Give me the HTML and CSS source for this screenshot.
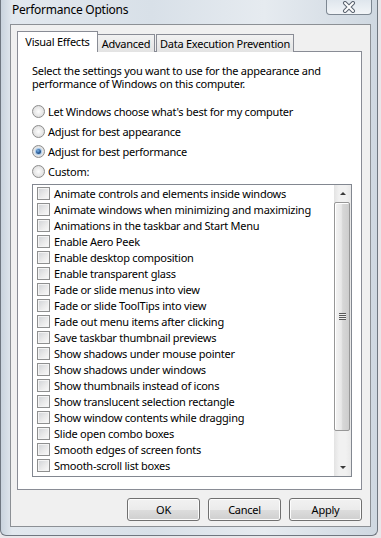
FILE: index.html
```html
<!DOCTYPE html>
<html lang="en">
<head>
    <meta charset="UTF-8">
    <meta name="viewport" content="width=device-width, initial-scale=1.0">
    <title>Performance Options</title>
    <link rel="stylesheet" href="styles.css">
</head>
<body>
    <div class="window">
        <div class="titlebar">
            <span class="title">Performance Options</span>
            <div class="close">
                <svg width="14" height="12" viewBox="0 0 14 12">
                    <path d="M3 2 L11 10 M11 2 L3 10" stroke="#5b6470" stroke-width="4" stroke-linecap="round"/>
                    <path d="M3 2 L11 10 M11 2 L3 10" stroke="#ffffff" stroke-width="2" stroke-linecap="round"/>
                </svg>
            </div>
        </div>

        <div class="client">
            <div class="tabs">
                <div class="tab active">Visual Effects</div>
                <div class="tab tab-adv">Advanced</div>
                <div class="tab tab-dep">Data Execution Prevention</div>
            </div>

            <div class="panel">
                <p class="intro">Select the settings you want to use for the appearance and<br>performance of Windows on this computer.</p>

                <div class="radios">
                    <div class="radio"><span class="circle"></span>Let Windows choose what's best for my computer</div>
                    <div class="radio"><span class="circle"></span>Adjust for best appearance</div>
                    <div class="radio"><span class="circle checked"></span>Adjust for best performance</div>
                    <div class="radio"><span class="circle"></span>Custom:</div>
                </div>

                <div class="listbox">
                    <div class="items">
                        <div class="item"><span class="box"></span>Animate controls and elements inside windows</div>
                        <div class="item"><span class="box"></span>Animate windows when minimizing and maximizing</div>
                        <div class="item"><span class="box"></span>Animations in the taskbar and Start Menu</div>
                        <div class="item"><span class="box"></span>Enable Aero Peek</div>
                        <div class="item"><span class="box"></span>Enable desktop composition</div>
                        <div class="item"><span class="box"></span>Enable transparent glass</div>
                        <div class="item"><span class="box"></span>Fade or slide menus into view</div>
                        <div class="item"><span class="box"></span>Fade or slide ToolTips into view</div>
                        <div class="item"><span class="box"></span>Fade out menu items after clicking</div>
                        <div class="item"><span class="box"></span>Save taskbar thumbnail previews</div>
                        <div class="item"><span class="box"></span>Show shadows under mouse pointer</div>
                        <div class="item"><span class="box"></span>Show shadows under windows</div>
                        <div class="item"><span class="box"></span>Show thumbnails instead of icons</div>
                        <div class="item"><span class="box"></span>Show translucent selection rectangle</div>
                        <div class="item"><span class="box"></span>Show window contents while dragging</div>
                        <div class="item"><span class="box"></span>Slide open combo boxes</div>
                        <div class="item"><span class="box"></span>Smooth edges of screen fonts</div>
                        <div class="item"><span class="box"></span>Smooth-scroll list boxes</div>
                    </div>
                    <div class="scrollbar">
                        <div class="arrow up"></div>
                        <div class="thumb"><span class="grip"></span></div>
                        <div class="track"></div>
                        <div class="arrow down"></div>
                    </div>
                </div>
            </div>

            <div class="buttons">
                <button>OK</button>
                <button>Cancel</button>
                <button>Apply</button>
            </div>
        </div>
    </div>
</body>
</html>
```

FILE: styles.css
```css
body {
    margin: 0;
    width: 381px;
    height: 538px;
    overflow: hidden;
    background: #e9e7ea;
    font-family: "Noto Sans", "Open Sans", sans-serif;
    font-size: 11px;
    letter-spacing: -0.25px;
    color: #000;
}
.window {
    width: 378px;
    height: 536px;
    box-sizing: border-box;
    padding: 0 6px 8px 9px;
    display: flex;
    flex-direction: column;
    border-radius: 0 0 6px 6px;
    border: 1px solid #6f7780;
    border-top: none;
    background: linear-gradient(90deg, #c9d3dd 0%, #e2e8ee 3%, #d8e0e8 40%, #e6ebf0 70%, #cfd8e1 100%);
}
.titlebar {
    height: 24px;
    display: flex;
    justify-content: space-between;
    align-items: flex-start;
}
.title {
    padding: 2px 0 0 2px;
    line-height: 16px;
    font-size: 12px;
}
.close {
    width: 46px;
    height: 15px;
    box-sizing: border-box;
    margin-right: -1px;
    border: 1px solid #7d8792;
    border-top: none;
    border-radius: 0 0 4px 4px;
    background: linear-gradient(#dfe6ed, #f2f5f8);
    display: flex;
    justify-content: center;
    align-items: center;
}
.client {
    flex: 1;
    background: #f0f0f0;
    border: 1px solid #8c9095;
    padding: 7px 8px 0 6px;
}
.tabs {
    display: flex;
    align-items: flex-end;
    height: 20px;
    margin-bottom: -1px;
}
.tab {
    height: 18px;
    box-sizing: border-box;
    border: 1px solid #898c95;
    border-bottom: none;
    background: linear-gradient(#f2f2f2, #e3e3e3);
    line-height: 17px;
    text-align: center;
    white-space: nowrap;
}
.tab.active {
    position: relative;
    z-index: 1;
    height: 21px;
    width: 81px;
    background: #fff;
    margin-right: -1px;
    line-height: 19px;
}
.tab-adv {
    width: 58px;
}
.tab-dep {
    width: 138px;
    margin-left: 1px;
}
.panel {
    height: 439px;
    box-sizing: border-box;
    background: #fff;
    border: 1px solid #898c95;
    padding: 12px 12px 0 14px;
}
.intro {
    margin: 0;
    line-height: 13px;
}
.radios {
    margin-top: 11px;
}
.radio {
    height: 20px;
    display: flex;
    align-items: center;
}
.circle {
    width: 13px;
    height: 13px;
    box-sizing: border-box;
    border-radius: 50%;
    border: 1px solid #8d8d8d;
    background: radial-gradient(circle at 50% 50%, #fdfdfd 0%, #e7e7e7 55%, #cfcfcf 100%);
    margin-right: 3px;
    display: flex;
    justify-content: center;
    align-items: center;
}
.circle.checked::after {
    content: "";
    width: 5px;
    height: 5px;
    border-radius: 50%;
    background: radial-gradient(circle at 40% 35%, #7fb6e8 0%, #2a5f9e 50%, #14304f 100%);
    box-shadow: 0 0 1px 1px #9cc4ea;
}
.listbox {
    margin-top: 3px;
    width: 320px;
    height: 293px;
    box-sizing: border-box;
    border: 1px solid #828790;
    display: flex;
}
.items {
    flex: 1;
    padding-left: 4px;
}
.item {
    height: 16px;
    display: flex;
    align-items: center;
}
.box {
    width: 13px;
    height: 13px;
    box-sizing: border-box;
    border: 1px solid #8e8f8f;
    background: linear-gradient(135deg, #cfd2d6 0%, #eaeaea 55%, #fafafa 100%);
    box-shadow: inset 0 0 0 1px #f4f4f4;
    margin-right: 4px;
}
.scrollbar {
    width: 17px;
    display: flex;
    flex-direction: column;
    background: linear-gradient(90deg, #e3e3e3, #f1f1f1 30%, #f1f1f1 70%, #e8e8e8);
}
.arrow {
    height: 17px;
    display: flex;
    justify-content: center;
    align-items: center;
}
.arrow::after {
    content: "";
    border-left: 3px solid transparent;
    border-right: 3px solid transparent;
}
.arrow.up::after {
    border-bottom: 3px solid #3a3a3a;
}
.arrow.down::after {
    border-top: 3px solid #3a3a3a;
}
.thumb {
    height: 229px;
    margin: 0 1px 0 0;
    box-sizing: border-box;
    border: 1px solid #979797;
    border-radius: 2px;
    background: linear-gradient(90deg, #f4f4f4 0%, #e8e8e8 45%, #d7d7d7 55%, #cdcdcd 100%);
    box-shadow: inset 1px 1px 0 #fff;
    display: flex;
    justify-content: center;
    align-items: center;
}
.grip {
    width: 7px;
    height: 7px;
    background: repeating-linear-gradient(#5a5a5a 0 1px, #eeeeee 1px 2px);
}
.track {
    flex: 1;
}
.buttons {
    display: flex;
    justify-content: flex-end;
    gap: 8px;
    margin-top: 8px;
}
button {
    width: 73px;
    height: 23px;
    padding: 0;
    border: 1px solid #707070;
    border-radius: 3px;
    background: linear-gradient(#f2f2f2 0%, #ebebeb 50%, #dddddd 51%, #cfcfcf 100%);
    box-shadow: inset 0 0 0 1px #fcfcfc;
    font-family: inherit;
    font-size: 11px;
    letter-spacing: inherit;
    color: #000;
}
```
